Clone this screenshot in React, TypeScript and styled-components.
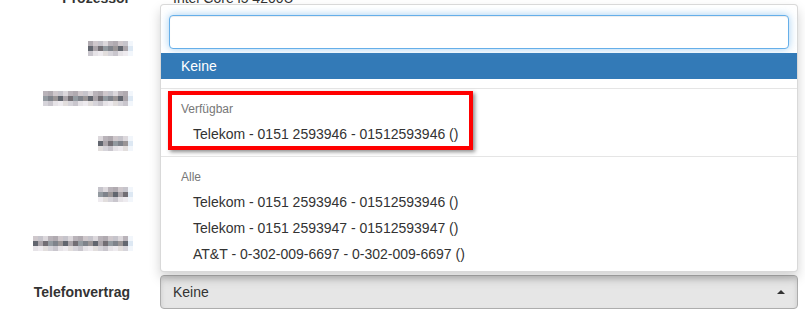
import React from "react";
import styled, { createGlobalStyle } from "styled-components";

const GlobalStyle = createGlobalStyle`
  body {
    margin: 0;
    background: #fff;
    overflow: hidden;
    font-family: "Liberation Sans", Arial, Helvetica, sans-serif;
    font-size: 14px;
    color: #333;
  }
`;

const Form = styled.div`
  width: 805px;
  margin-top: -19px;
`;

const Row = styled.div`
  display: flex;
  align-items: center;
  height: 34px;
  margin-bottom: 15px;
`;

const Label = styled.div`
  width: 160px;
  box-sizing: border-box;
  padding-right: 30px;
  text-align: right;
  font-weight: bold;
  display: flex;
  justify-content: flex-end;
`;

const Control = styled.div`
  position: relative;
  flex: 1;
  margin-right: 7px;
  height: 34px;
`;

const StaticText = styled.div`
  padding: 7px 13px;
  line-height: 20px;
`;

const MosaicGrid = styled.div<{ $cols: number; $shift: number }>`
  display: grid;
  grid-template-columns: repeat(${(p) => p.$cols}, 5px);
  grid-auto-rows: 5px;
  margin-right: -3px;
  margin-top: ${(p) => p.$shift * 2}px;
`;

const Cell = styled.div<{ $c: string }>`
  background: ${(p) => p.$c};
`;

function Mosaic({ cols, seed, shift = 0 }: { cols: number; seed: number; shift?: number }) {
  const tones = [
    ["#cfc8cc", "#b9b3b9", "#c6c4cb", "#b0aab0", "#dcd8dc"],
    ["#7f838b", "#9a9596", "#62666f", "#aaa4a9", "#726e74", "#939aa0"],
    ["#e6e3e7", "#d6d4da", "#eeebef", "#c9c6cd", "#e2dedd"],
  ];
  const cells: string[] = [];
  for (let r = 0; r < 3; r++) {
    for (let c = 0; c < cols; c++) {
      if (c === cols - 1) {
        cells.push(r === 1 ? "#dde8f3" : "#f2f6fb");
        continue;
      }
      const t = tones[r];
      cells.push(t[(c * 7 + seed * 3 + r * 5) % t.length]);
    }
  }
  return (
    <MosaicGrid $cols={cols} $shift={shift}>
      {cells.map((c, i) => (
        <Cell key={i} $c={c} />
      ))}
    </MosaicGrid>
  );
}

const SelectButton = styled.div`
  box-sizing: border-box;
  height: 34px;
  display: flex;
  align-items: center;
  justify-content: space-between;
  padding: 6px 12px;
  background: #e6e6e6;
  border: 1px solid #adadad;
  border-radius: 4px;
  box-shadow: inset 0 3px 5px rgba(0, 0, 0, 0.125);
`;

const Caret = styled.span`
  width: 0;
  height: 0;
  border-left: 4px solid transparent;
  border-right: 4px solid transparent;
  border-bottom: 4px solid #333;
`;

const Menu = styled.div`
  position: absolute;
  left: 0;
  right: 0;
  bottom: calc(100% + 3px);
  background: #fff;
  border: 1px solid rgba(0, 0, 0, 0.15);
  border-radius: 4px;
  box-shadow: 0 6px 12px rgba(0, 0, 0, 0.175);
  z-index: 10;
`;

const SearchBox = styled.div`
  padding: 10px 8px 0;
`;

const SearchInput = styled.input`
  box-sizing: border-box;
  width: 100%;
  height: 34px;
  padding: 6px 12px;
  font: inherit;
  border: 1px solid #66afe9;
  border-radius: 4px;
  outline: none;
  box-shadow: inset 0 1px 1px rgba(0, 0, 0, 0.075), 0 0 8px rgba(102, 175, 233, 0.6);
`;

const List = styled.div`
  padding: 4px 0;
`;

const Option = styled.div<{ $active?: boolean; $indent?: boolean }>`
  padding: 3px 20px 3px ${(p) => (p.$indent ? "32px" : "20px")};
  line-height: 20px;
  white-space: nowrap;
  color: ${(p) => (p.$active ? "#fff" : "#333")};
  background: ${(p) => (p.$active ? "#337ab7" : "transparent")};
`;

const Divider = styled.div`
  height: 1px;
  margin: 9px 0;
  background: #e5e5e5;
`;

const Header = styled.div`
  padding: 3px 20px;
  font-size: 12px;
  line-height: 17px;
  color: #777;
`;

const Group = styled.div`
  position: relative;
`;

const Highlight = styled.div`
  position: absolute;
  left: 7px;
  top: -7px;
  width: 305px;
  height: 59px;
  box-sizing: border-box;
  border: 4px solid #f00;
  box-shadow: 2px 2px 4px rgba(0, 0, 0, 0.45);
  pointer-events: none;
`;

const available = ["Telekom - 0151 2593946 - 01512593946 ()"];
const all = [
  "Telekom - 0151 2593946 - 01512593946 ()",
  "Telekom - 0151 2593947 - 01512593947 ()",
  "AT&T - 0-302-009-6697 - 0-302-009-6697 ()",
];

export default function App() {
  return (
    <>
      <GlobalStyle />
      <Form>
        <Row>
          <Label>Prozessor</Label>
          <Control>
            <StaticText>Intel Core i5 4200U</StaticText>
          </Control>
        </Row>
        <Row>
          <Label>
            <Mosaic cols={9} seed={1} shift={1} />
          </Label>
          <Control />
        </Row>
        <Row>
          <Label>
            <Mosaic cols={18} seed={2} shift={2} />
          </Label>
          <Control />
        </Row>
        <Row>
          <Label>
            <Mosaic cols={7} seed={3} shift={-2} />
          </Label>
          <Control />
        </Row>
        <Row>
          <Label>
            <Mosaic cols={7} seed={4} />
          </Label>
          <Control />
        </Row>
        <Row>
          <Label>
            <Mosaic cols={20} seed={5} />
          </Label>
          <Control />
        </Row>
        <Row>
          <Label>Telefonvertrag</Label>
          <Control>
            <Menu>
              <SearchBox>
                <SearchInput />
              </SearchBox>
              <List>
                <Option $active>Keine</Option>
                <Divider />
                <Group>
                  <Header>Verfügbar</Header>
                  {available.map((o) => (
                    <Option key={o} $indent>
                      {o}
                    </Option>
                  ))}
                  <Highlight />
                </Group>
                <Divider />
                <Header>Alle</Header>
                {all.map((o) => (
                  <Option key={o} $indent>
                    {o}
                  </Option>
                ))}
              </List>
            </Menu>
            <SelectButton>
              <span>Keine</span>
              <Caret />
            </SelectButton>
          </Control>
        </Row>
      </Form>
    </>
  );
}
